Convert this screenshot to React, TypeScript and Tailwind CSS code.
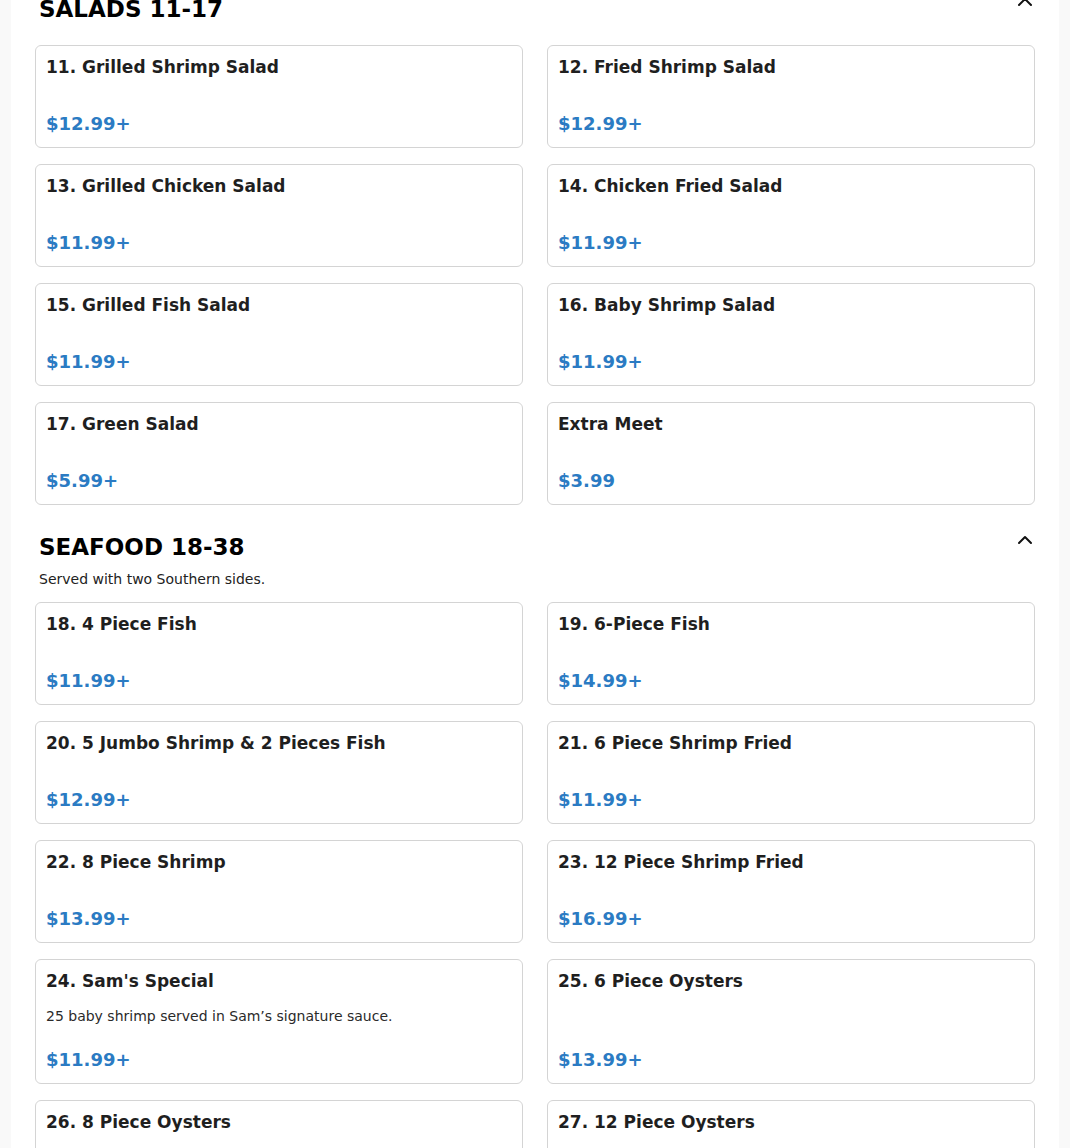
import React from "react";

type Item = { name: string; price: string; desc?: string };

const salads: Item[] = [
  { name: "11. Grilled Shrimp Salad", price: "$12.99+" },
  { name: "12. Fried Shrimp Salad", price: "$12.99+" },
  { name: "13. Grilled Chicken Salad", price: "$11.99+" },
  { name: "14. Chicken Fried Salad", price: "$11.99+" },
  { name: "15. Grilled Fish Salad", price: "$11.99+" },
  { name: "16. Baby Shrimp Salad", price: "$11.99+" },
  { name: "17. Green Salad", price: "$5.99+" },
  { name: "Extra Meet", price: "$3.99" },
];

const seafood: Item[] = [
  { name: "18. 4 Piece Fish", price: "$11.99+" },
  { name: "19. 6-Piece Fish", price: "$14.99+" },
  { name: "20. 5 Jumbo Shrimp & 2 Pieces Fish", price: "$12.99+" },
  { name: "21. 6 Piece Shrimp Fried", price: "$11.99+" },
  { name: "22. 8 Piece Shrimp", price: "$13.99+" },
  { name: "23. 12 Piece Shrimp Fried", price: "$16.99+" },
  { name: "24. Sam's Special", price: "$11.99+", desc: "25 baby shrimp served in Sam\u2019s signature sauce." },
  { name: "25. 6 Piece Oysters", price: "$13.99+" },
  { name: "26. 8 Piece Oysters", price: "$13.99+" },
  { name: "27. 12 Piece Oysters", price: "$17.99+" },
];

function Chevron() {
  return (
    <svg width="24" height="24" viewBox="0 0 24 24" fill="none" stroke="#111" strokeWidth="2" strokeLinecap="round" strokeLinejoin="round" className="shrink-0 mr-[-6px] mt-[-3px]">
      <path d="m18 15-6-6-6 6" />
    </svg>
  );
}

function Card({ item }: { item: Item }) {
  return (
    <div className="flex flex-col rounded-md border border-[#d4d4d4] bg-white px-[10px] pt-[10px] pb-[12px]">
      <div className="text-[17px] font-bold leading-[22.5px] text-[#1f1f1f]">{item.name}</div>
      {item.desc && (
        <div className="mt-[12px] text-[14px] leading-[22px] text-[#2a2a2a]">{item.desc}</div>
      )}
      <div className={`mt-auto ${item.desc ? "pt-[22px]" : "pt-[34px]"} text-[18px] font-bold leading-[22.5px] text-[#2b7bc3]`}>
        {item.price}
      </div>
    </div>
  );
}

function Section({ title, desc, items }: { title: string; desc?: string; items: Item[] }) {
  return (
    <section>
      <div className="flex items-start justify-between px-1">
        <h2 className="text-[23px] font-bold leading-8 text-black">{title}</h2>
        <Chevron />
      </div>
      {desc && <p className="mt-[6px] px-1 text-[14px] leading-5 text-[#222]">{desc}</p>}
      <div className={`${desc ? "mt-[13px]" : "mt-[20px]"} grid grid-cols-2 gap-x-6 gap-y-4`}>
        {items.map((it) => (
          <Card key={it.name} item={it} />
        ))}
      </div>
    </section>
  );
}

export default function App() {
  return (
    <div className="min-h-screen bg-[#f9f9f9] px-[11px]" style={{ fontFamily: '"DejaVu Sans", sans-serif' }}>
      <div className="mt-[-7px] bg-white px-6 pb-10">
        <Section title="SALADS 11-17" items={salads} />
        <div className="h-[26px]" />
        <Section title="SEAFOOD 18-38" desc="Served with two Southern sides." items={seafood} />
      </div>
    </div>
  );
}
